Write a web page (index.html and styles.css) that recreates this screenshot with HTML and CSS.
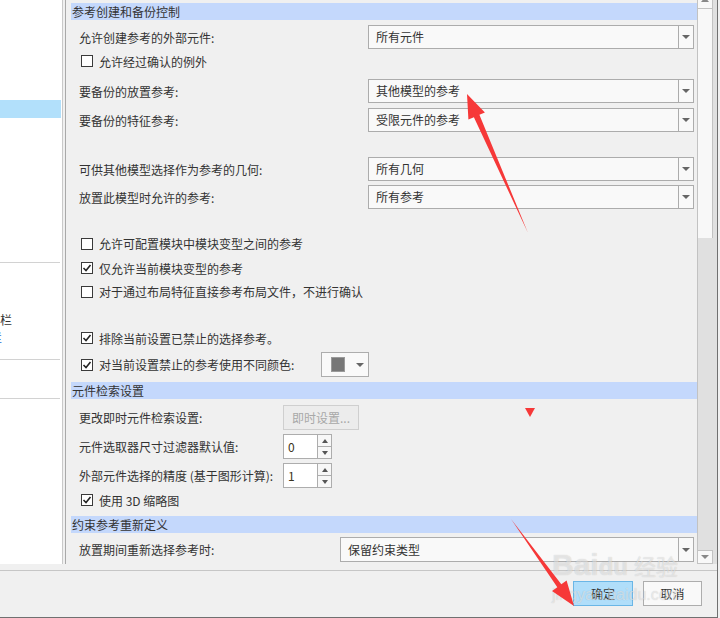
FILE: index.html
```html
<!DOCTYPE html>
<html>
<head>
    <meta charset="UTF-8">
    <title>参考控制</title>
    <link rel="stylesheet" href="styles.css">
</head>
<body>
    <div class="dialog">
        <div class="main">
            <div class="sidebar">
                <div class="side-sel"></div>
                <div class="side-rule first"></div>
                <div class="side-text">栏</div>
                <div class="side-text link"><span class="cut">栏</span></div>
                <div class="side-rule second"></div>
                <div class="side-rule third"></div>
            </div>
            <div class="content">
                <div class="pane">
                    <div class="sec-head first">参考创建和备份控制</div>
                    <div class="row r1">
                        <span class="lbl">允许创建参考的外部元件:</span>
                        <div class="combo">所有元件<span class="drop"></span></div>
                    </div>
                    <div class="row cbrow r2">
                        <span class="cb"></span><span class="cb-text">允许经过确认的例外</span>
                    </div>
                    <div class="row r3">
                        <span class="lbl">要备份的放置参考:</span>
                        <div class="combo">其他模型的参考<span class="drop"></span></div>
                    </div>
                    <div class="row r4">
                        <span class="lbl">要备份的特征参考:</span>
                        <div class="combo">受限元件的参考<span class="drop"></span></div>
                    </div>
                    <div class="row r5">
                        <span class="lbl">可供其他模型选择作为参考的几何:</span>
                        <div class="combo">所有几何<span class="drop"></span></div>
                    </div>
                    <div class="row r6">
                        <span class="lbl">放置此模型时允许的参考:</span>
                        <div class="combo">所有参考<span class="drop"></span></div>
                    </div>
                    <div class="row cbrow r7">
                        <span class="cb"></span><span class="cb-text">允许可配置模块中模块变型之间的参考</span>
                    </div>
                    <div class="row cbrow r8">
                        <span class="cb checked"><svg width="10" height="10" viewBox="0 0 10 10"><polyline points="1.5,5 4,7.5 8.5,2" /></svg></span><span class="cb-text">仅允许当前模块变型的参考</span>
                    </div>
                    <div class="row cbrow r9">
                        <span class="cb"></span><span class="cb-text">对于通过布局特征直接参考布局文件，不进行确认</span>
                    </div>
                    <div class="row cbrow r10">
                        <span class="cb checked"><svg width="10" height="10" viewBox="0 0 10 10"><polyline points="1.5,5 4,7.5 8.5,2" /></svg></span><span class="cb-text">排除当前设置已禁止的选择参考。</span>
                    </div>
                    <div class="row cbrow r11">
                        <span class="cb checked"><svg width="10" height="10" viewBox="0 0 10 10"><polyline points="1.5,5 4,7.5 8.5,2" /></svg></span><span class="cb-text color-lbl">对当前设置禁止的参考使用不同颜色:</span>
                        <div class="color-btn"><span class="swatch"></span><span class="drop small"></span></div>
                    </div>

                    <div class="sec-head second">元件检索设置</div>
                    <div class="row r12">
                        <span class="lbl short">更改即时元件检索设置:</span>
                        <div class="btn-disabled">即时设置...</div>
                    </div>
                    <div class="row r13">
                        <span class="lbl short">元件选取器尺寸过滤器默认值:</span>
                        <div class="spin"><span class="spin-val">0</span><span class="spin-btns"><span class="up"></span><span class="down"></span></span></div>
                    </div>
                    <div class="row r14">
                        <span class="lbl short">外部元件选择的精度 (基于图形计算):</span>
                        <div class="spin"><span class="spin-val">1</span><span class="spin-btns"><span class="up"></span><span class="down"></span></span></div>
                    </div>
                    <div class="row cbrow r15">
                        <span class="cb checked"><svg width="10" height="10" viewBox="0 0 10 10"><polyline points="1.5,5 4,7.5 8.5,2" /></svg></span><span class="cb-text">使用 3D 缩略图</span>
                    </div>

                    <div class="sec-head third">约束参考重新定义</div>
                    <div class="row r16">
                        <span class="lbl">放置期间重新选择参考时:</span>
                        <div class="combo wide">保留约束类型<span class="drop"></span></div>
                    </div>
                </div>
                <div class="vscroll">
                    <div class="sb-up"><span class="sb-arrow-up"></span></div>
                    <div class="sb-thumb"></div>
                    <div class="sb-track"></div>
                    <div class="sb-down"><span class="sb-arrow-down"></span></div>
                </div>
            </div>
        </div>
        <div class="footer">
            <button class="btn ok">确定</button>
            <button class="btn">取消</button>
        </div>
    </div>

    <!-- watermark and red marks drawn over the dialog -->
    <div class="watermark">
        <div class="wm-big">Bai<span class="paw">du</span><span class="wm-cn">经验</span></div>
        <div class="wm-small">jingyan.baidu.com</div>
    </div>
    <svg class="marks" width="720" height="618" viewBox="0 0 720 618">
        <polygon points="467,94 484.9,112.4 479.4,114.8 528,233 473.9,117.2 468.4,119.6" />
        <polygon points="574,606 552,591 557.3,587.2 511,519 561.3,584.2 566.6,580.4" />
        <polygon points="525,408 535,408 530,417" />
    </svg>
</body>
</html>
```

FILE: styles.css
```css
* {
    box-sizing: border-box;
}
html, body {
    margin: 0;
}
body {
    width: 720px;
    height: 618px;
    overflow: hidden;
    position: relative;
    background: #f0f0f0;
    font-family: "Noto Sans CJK SC", "Liberation Sans", sans-serif;
    font-size: 12px;
    color: #333;
}
.dialog {
    width: 718px;
    height: 618px;
    border-right: 1px solid #707070;
    border-bottom: 1px solid #707070;
    display: flex;
    flex-direction: column;
}
.main {
    display: flex;
    height: 564px;
    margin-bottom: 6px;
}

/* left tree, mostly cut off */
.sidebar {
    width: 63px;
    background: #fff;
    border-right: 1px solid #c9c9c9;
    margin-right: 2px;
    padding-top: 100px;
    overflow: hidden;
}
.side-sel {
    height: 18px;
    margin-right: 1px;
    background: #b2e0fb;
}
.side-rule {
    height: 1px;
    margin-right: 2px;
    background: #d2d2d2;
}
.side-rule.first {
    margin-top: 144px;
}
.side-rule.second {
    margin-top: 14px;
}
.side-rule.third {
    margin-top: 38px;
}
.side-text {
    height: 14px;
    line-height: 14px;
    margin-top: 50px;
    white-space: nowrap;
}
.side-text.link {
    margin-top: 4px;
    color: #2a6fd6;
}
.side-text .cut {
    margin-left: -10px;
}

/* right settings pane */
.content {
    flex: 1;
    display: flex;
    border-left: 1px solid #a9a9a9;
}
.pane {
    flex: 1;
    padding-left: 5px;
    background: #f0f0f0;
}
.sec-head {
    height: 17px;
    line-height: 17px;
    padding-left: 1px;
    background: #c4d8fc;
    color: #333;
}
.sec-head.first {
    margin-top: 3px;
}
.sec-head.second {
    margin-top: 5px;
}
.sec-head.third {
    margin-top: 4px;
}
.row {
    display: flex;
    align-items: center;
    height: 24px;
    padding-left: 8px;
    padding-right: 3px;
}
.cbrow {
    padding-left: 10px;
}
.r1 { margin-top: 5px; }
.r3 { margin-top: 6px; }
.r4 { margin-top: 5px; }
.r5 { margin-top: 25px; }
.r6 { margin-top: 4px; }
.r7 { margin-top: 22px; height: 25px; }
.r8 { height: 24px; }
.r9 { height: 23px; }
.r10 { margin-top: 23px; }
.r11 { margin-top: 2px; height: 25px; }
.r12 { margin-top: 6px; height: 25px; }
.r13 { margin-top: 4px; height: 25px; }
.r14 { margin-top: 4px; height: 25px; }
.r15 { height: 24px; }
.r16 { margin-top: 4px; height: 25px; }

.lbl {
    white-space: nowrap;
}
.lbl.short {
    width: 204px;
}
.combo {
    position: relative;
    margin-left: auto;
    width: 326px;
    height: 24px;
    line-height: 22px;
    padding-left: 7px;
    background: #f9f9f9;
    border: 1px solid #acacac;
}
.r16 .combo {
    height: 25px;
    line-height: 23px;
}
.combo.wide {
    width: 354px;
}
.drop {
    position: absolute;
    top: 0;
    right: 0;
    width: 15px;
    height: 100%;
    border-left: 1px solid #acacac;
}
.drop::after {
    content: "";
    position: absolute;
    left: 3px;
    top: 50%;
    margin-top: -2px;
    border-left: 4px solid transparent;
    border-right: 4px solid transparent;
    border-top: 4px solid #666;
}
.drop.small {
    border-left: none;
}

.cb {
    width: 12px;
    height: 12px;
    border: 1px solid #3a3a3a;
    background: #fff;
    display: flex;
    align-items: center;
    justify-content: center;
    flex: none;
}
.cb svg polyline {
    fill: none;
    stroke: #222;
    stroke-width: 1.6;
}
.cb-text {
    margin-left: 6px;
    white-space: nowrap;
}
.color-lbl {
    width: 222px;
}
.color-btn {
    position: relative;
    width: 48px;
    height: 25px;
    background: #f9f9f9;
    border: 1px solid #adadad;
}
.swatch {
    position: absolute;
    left: 9px;
    top: 4px;
    width: 14px;
    height: 15px;
    background: #777;
    border: 1px solid #9a9a9a;
}
.btn-disabled {
    width: 76px;
    height: 25px;
    line-height: 23px;
    text-align: center;
    background: #ececec;
    border: 1px solid #cfcfcf;
    color: #a8a8a8;
}
.spin {
    display: flex;
    width: 49px;
    height: 25px;
    border: 1px solid #adadad;
    background: #fff;
}
.spin-val {
    width: 33px;
    line-height: 23px;
    padding-left: 4px;
    color: #3a3320;
}
.spin-btns {
    flex: 1;
    display: flex;
    flex-direction: column;
    border-left: 1px solid #adadad;
    background: #f7f7f7;
}
.spin-btns span {
    flex: 1;
    position: relative;
}
.spin-btns .up {
    border-bottom: 1px solid #adadad;
}
.spin-btns .up::after,
.spin-btns .down::after {
    content: "";
    position: absolute;
    left: 4px;
    top: 4px;
    border-left: 3px solid transparent;
    border-right: 3px solid transparent;
}
.spin-btns .up::after {
    border-bottom: 4px solid #555;
}
.spin-btns .down::after {
    border-top: 4px solid #555;
}

/* scrollbar */
.vscroll {
    width: 20px;
    display: flex;
    flex-direction: column;
    background: #e0e0e0;
    border-left: 1px solid #c2c2c2;
}
.sb-up, .sb-thumb, .sb-down {
    width: 15px;
    background: #f8f8f8;
    border-right: 1px solid #c2c2c2;
}
.sb-up {
    height: 9px;
    border-bottom: 1px solid #c2c2c2;
    position: relative;
    overflow: hidden;
}
.sb-arrow-up {
    position: absolute;
    left: 3px;
    top: -3px;
    border-left: 4px solid transparent;
    border-right: 4px solid transparent;
    border-bottom: 5px solid #888;
}
.sb-thumb {
    height: 229px;
}
.sb-track {
    flex: 1;
}
.sb-down {
    height: 14px;
    border-top: 1px solid #c2c2c2;
    border-bottom: 1px solid #c2c2c2;
    position: relative;
}
.sb-arrow-down {
    position: absolute;
    left: 3px;
    top: 4px;
    border-left: 4px solid transparent;
    border-right: 4px solid transparent;
    border-top: 4px solid #888;
}

/* footer */
.footer {
    flex: 1;
    display: flex;
    justify-content: flex-end;
    gap: 10px;
    padding: 10px 15px 0 0;
    border-top: 1px solid #c6c6c6;
}
.btn {
    width: 59px;
    height: 25px;
    padding: 0;
    font-family: inherit;
    font-size: 12px;
    color: #333;
    background: #f9f9f9;
    border: 1px solid #adadad;
}
.btn.ok {
    width: 60px;
    background: #b0defa;
    border-color: #6ab6e6;
}

/* overlays */
.watermark {
    position: absolute;
    left: 552px;
    top: 549px;
    color: rgba(255, 255, 255, 0.5);
    text-shadow: 0 0 1px rgba(0, 0, 0, 0.2);
    font-family: "Liberation Sans", "Noto Sans CJK SC", sans-serif;
    pointer-events: none;
    white-space: nowrap;
}
.wm-big {
    font-size: 30px;
    font-weight: bold;
    line-height: 32px;
}
.wm-big .paw {
    font-size: 24px;
}
.wm-cn {
    margin-left: 6px;
    font-size: 22px;
    font-weight: normal;
    font-family: "Noto Sans CJK SC", sans-serif;
}
.wm-small {
    font-size: 16px;
    line-height: 18px;
    margin-top: 3px;
}
.marks {
    position: absolute;
    left: 0;
    top: 0;
    pointer-events: none;
}
.marks polygon {
    fill: #f63838;
}
```
